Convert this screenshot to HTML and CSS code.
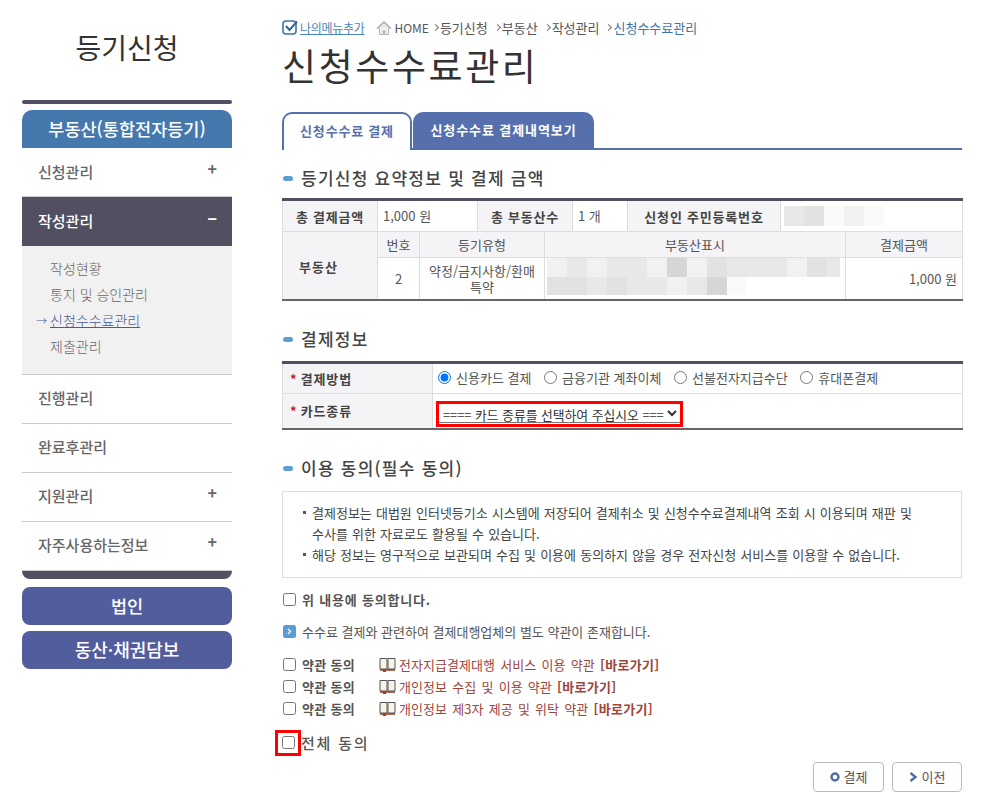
FILE: index.html
```html
<!DOCTYPE html>
<html lang="ko">
<head>
<meta charset="utf-8">
<title>신청수수료관리</title>
<link rel="stylesheet" href="styles.css">
</head>
<body>
<div class="page">
  <aside class="side">
    <h2 class="side-title">등기신청</h2>
    <div class="side-bar-top"></div>
    <div class="side-head">부동산(통합전자등기)</div>
    <ul class="menu">
      <li class="menu-item"><span>신청관리</span><span class="sign">+</span></li>
      <li class="menu-item active"><span>작성관리</span><span class="sign">−</span></li>
      <li class="submenu">
        <a>작성현황</a>
        <a>통지 및 승인관리</a>
        <a class="current">신청수수료관리</a>
        <a>제출관리</a>
      </li>
      <li class="menu-item"><span>진행관리</span></li>
      <li class="menu-item"><span>완료후관리</span></li>
      <li class="menu-item"><span>지원관리</span><span class="sign">+</span></li>
      <li class="menu-item"><span>자주사용하는정보</span><span class="sign">+</span></li>
    </ul>
    <div class="side-bar-bottom"></div>
    <div class="side-btn">법인</div>
    <div class="side-btn wide">동산·채권담보</div>
  </aside>
  <main class="main">
    <div class="crumbs">
      <svg class="ic-check" width="17" height="17" viewBox="0 0 17 17"><rect x="1" y="2" width="13" height="13" rx="3" fill="none" stroke="#3d74a8" stroke-width="1.6"/><path d="M4 7l3.500 4L15 2.500" fill="none" stroke="#2f6598" stroke-width="2"/></svg>
      <a class="mymenu">나의메뉴추가</a>
      <svg class="ic-home" width="16" height="14" viewBox="0 0 16 14"><path d="M1 7.500L8 1l7 6.500" fill="#e8e8e8" stroke="#a9a9a9" stroke-width="1.300"/><path d="M3.500 7v6.500h9V7" fill="#f4f4f4" stroke="#b5b5b5"/><rect x="6.500" y="9" width="3" height="4.500" fill="#bdbdbd"/></svg>
      <span class="crumb first">HOME</span>
      <span class="crumb">등기신청</span>
      <span class="crumb">부동산</span>
      <span class="crumb">작성관리</span>
      <span class="crumb here">신청수수료관리</span>
    </div>
    <h1 class="page-title">신청수수료관리</h1>
    <div class="tabs">
      <div class="tab on">신청수수료 결제</div>
      <div class="tab">신청수수료 결제내역보기</div>
    </div>

    <h3 class="sec first-sec">등기신청 요약정보 및 결제 금액</h3>
    <table class="tbl">
      <colgroup>
        <col class="c95"><col class="c42"><col class="c58"><col class="c67"><col class="c28"><col class="c55"><col class="c153"><col class="c65"><col class="c117">
      </colgroup>
      <tr class="r32">
        <th>총 결제금액</th>
        <td colspan="2">1,000 원</td>
        <th colspan="2">총 부동산수</th>
        <td>1 개</td>
        <th>신청인 주민등록번호</th>
        <td colspan="2" class="blurcell"><span class="blur"><i class="g2"></i><i class="g3"></i><i class="g0"></i><i class="g1"></i><i class="g0"></i></span></td>
      </tr>
      <tr class="r26">
        <th rowspan="2" class="rowh">부동산</th>
        <th class="sub">번호</th>
        <th class="sub" colspan="2">등기유형</th>
        <th class="sub" colspan="4">부동산표시</th>
        <th class="sub">결제금액</th>
      </tr>
      <tr class="r42">
        <td class="ctr">2</td>
        <td class="ctr tight" colspan="2">약정/금지사항/환매<br>특약</td>
        <td colspan="4" class="blurcell tall">
          <span class="blur top"><i class="g1"></i><i class="g2"></i><i class="g1"></i><i class="g2"></i><i class="g2"></i><i class="g1"></i><i class="g4"></i><i class="g1"></i><i class="g3"></i><i class="g2"></i><i class="g2"></i><i class="g2"></i><i class="g1"></i><i class="g3"></i><i class="g2 last"></i></span>
          <span class="blur low"><i class="g3"></i><i class="g3"></i><i class="g2"></i><i class="g3"></i><i class="g2"></i><i class="g2"></i><i class="g1"></i><i class="g2"></i><i class="g4"></i><i class="g0"></i></span>
        </td>
        <td class="num">1,000 원</td>
      </tr>
    </table>

    <h3 class="sec pay-sec">결제정보</h3>
    <table class="tbl pay">
      <colgroup><col class="c150"><col class="c530"></colgroup>
      <tr class="r31">
        <th class="left"><b class="star">*</b> 결제방법</th>
        <td class="radios">
          <label><input type="radio" name="pay" checked>신용카드 결제</label>
          <label><input type="radio" name="pay">금융기관 계좌이체</label>
          <label><input type="radio" name="pay">선불전자지급수단</label>
          <label><input type="radio" name="pay">휴대폰결제</label>
        </td>
      </tr>
      <tr class="r35">
        <th class="left"><b class="star">*</b> 카드종류</th>
        <td class="selcell">
          <span class="redbox">
            <select class="card"><option>==== 카드 종류를 선택하여 주십시오 ====</option></select>
          </span>
        </td>
      </tr>
    </table>

    <h3 class="sec agree-sec">이용 동의(필수 동의)</h3>
    <div class="notice">
      <p class="dot">결제정보는 대법원 인터넷등기소 시스템에 저장되어 결제취소 및 신청수수료결제내역 조회 시 이용되며 재판 및<br>수사를 위한 자료로도 활용될 수 있습니다.</p>
      <p class="dot">해당 정보는 영구적으로 보관되며 수집 및 이용에 동의하지 않을 경우 전자신청 서비스를 이용할 수 없습니다.</p>
    </div>

    <label class="agree-main"><input type="checkbox"><b>위 내용에 동의합니다.</b></label>
    <div class="info">
      <svg width="13" height="13" viewBox="0 0 13 13"><rect width="13" height="13" rx="2.500" fill="#5a9bd0"/><path d="M5 4l2.500 2.500L5 9" fill="none" stroke="#fff" stroke-width="1.300"/></svg>
      수수료 결제와 관련하여 결제대행업체의 별도 약관이 존재합니다.
    </div>

    <div class="terms">
      <div class="term"><label><input type="checkbox"><b>약관 동의</b></label><svg class="book" width="17" height="15" viewBox="0 0 17 15"><path d="M1 1.500h7v10.500H1zM9 1.500h7v10.500H9z" fill="#f7f3e6" stroke="#555"/><path d="M1 13h15" stroke="#8a3a20" stroke-width="1.500"/><rect x="4" y="12" width="3" height="3" fill="#b33a14"/></svg><a>전자지급결제대행 서비스 이용 약관 <b>[바로가기]</b></a></div>
      <div class="term"><label><input type="checkbox"><b>약관 동의</b></label><svg class="book" width="17" height="15" viewBox="0 0 17 15"><path d="M1 1.500h7v10.500H1zM9 1.500h7v10.500H9z" fill="#f7f3e6" stroke="#555"/><path d="M1 13h15" stroke="#8a3a20" stroke-width="1.500"/><rect x="4" y="12" width="3" height="3" fill="#b33a14"/></svg><a>개인정보 수집 및 이용 약관 <b>[바로가기]</b></a></div>
      <div class="term"><label><input type="checkbox"><b>약관 동의</b></label><svg class="book" width="17" height="15" viewBox="0 0 17 15"><path d="M1 1.500h7v10.500H1zM9 1.500h7v10.500H9z" fill="#f7f3e6" stroke="#555"/><path d="M1 13h15" stroke="#8a3a20" stroke-width="1.500"/><rect x="4" y="12" width="3" height="3" fill="#b33a14"/></svg><a>개인정보 제3자 제공 및 위탁 약관 <b>[바로가기]</b></a></div>
    </div>

    <div class="all">
      <span class="redcheck"><input type="checkbox"></span>
      <b>전체 동의</b>
    </div>

    <div class="actions">
      <button class="btn" type="button"><svg width="10" height="10" viewBox="0 0 10 10"><circle cx="5" cy="5" r="3.500" fill="none" stroke="#4f6ca8" stroke-width="2.400"/></svg>결제</button>
      <button class="btn" type="button"><svg width="9" height="10" viewBox="0 0 9 10"><path d="M1.500 1l5 4-5 4" fill="none" stroke="#4f6ca8" stroke-width="2.400"/></svg>이전</button>
    </div>
  </main>
</div>
</body>
</html>
```

FILE: styles.css
```css
* { box-sizing: border-box; }
html, body { margin: 0; padding: 0; }
body {
  width: 984px;
  height: 809px;
  overflow: hidden;
  background: #fff;
  color: #555;
  font-family: "Noto Sans CJK KR", "Liberation Sans", sans-serif;
  font-size: 13px;
}
.page { display: flex; gap: 50px; padding-left: 22px; }

/* sidebar */
.side { width: 210px; flex: none; }
.side-title {
  margin: 0;
  height: 100px;
  padding-top: 28px;
  text-align: center;
  font-size: 28px;
  line-height: 38px;
  font-weight: 400;
  color: #333;
}
.side-bar-top { height: 4px; background: #514f60; border-radius: 2px; }
.side-head {
  margin-top: 6px;
  height: 38px;
  line-height: 37px;
  text-align: center;
  background: #4579ae;
  color: #fff;
  font-size: 17.5px;
  font-weight: 500;
  border-radius: 10px 10px 0 0;
}
.menu { list-style: none; margin: 0; padding: 0; }
.menu-item {
  height: 49px;
  padding: 0 15px 2px 16px;
  display: flex;
  justify-content: space-between;
  align-items: center;
  font-size: 15px;
  font-weight: 500;
  color: #666;
  border-bottom: 1px solid #ccc;
}
.submenu ~ .menu-item { padding-bottom: 4px; }
.menu-item.active { background: #514f60; color: #fff; border-bottom: 0; }
.sign { font-size: 16px; font-weight: 700; line-height: 16px; margin-top: -6px; }
.submenu {
  height: 129px;
  padding: 9px 0 0 28px;
  background: #f1f1f1;
  border-bottom: 1px solid #ccc;
  display: flex;
  flex-direction: column;
}
.submenu a { height: 26px; line-height: 26px; font-size: 14px; color: #666; font-weight: 300; position: relative; }
.submenu a.current { color: #4c5a96; text-decoration: underline; align-self: flex-start; }
.submenu a.current::before {
  content: "→";
  position: absolute;
  left: -14px;
  top: 0;
  font-size: 11px;
}
.side-bar-bottom { height: 8px; background: #514f60; border-radius: 0 0 10px 10px; }
.side-btn {
  margin-top: 8px;
  height: 38px;
  line-height: 37px;
  text-align: center;
  background: #525d9e;
  color: #fff;
  font-size: 17.5px;
  font-weight: 500;
  border-radius: 8px;
}
.side-btn.wide { margin-top: 6px; font-size: 18px; }

/* main */
.main { width: 680px; flex: none; }
.crumbs { display: flex; align-items: center; height: 17px; margin-top: 19px; font-size: 13px; color: #555; white-space: nowrap; }
.ic-check { margin-right: 1px; }
.mymenu { color: #4b86b8; text-decoration: underline; font-size: 12px; letter-spacing: -0.3px; margin-right: 12px; }
.ic-home { margin-right: 2px; }
.crumb { margin-left: 2px; padding-left: 8px; position: relative; margin-right: 4px; }
.crumb.first { padding-left: 0; margin-left: 0; margin-right: 1px; font-size: 12px; }
.crumb::before {
  content: "";
  position: absolute;
  left: 1px;
  top: 7px;
  width: 4px;
  height: 4px;
  border-top: 1px solid #777;
  border-right: 1px solid #777;
  transform: rotate(45deg);
}
.crumb.first::before { display: none; }
.crumb.here { color: #3d74a8; }
.page-title {
  margin: 5px 0 0;
  height: 49px;
  line-height: 49px;
  font-size: 37px;
  font-weight: 400;
  letter-spacing: 2.6px;
  color: #333;
}
.tabs { margin-top: 22px; display: flex; height: 38px; border-bottom: 2px solid #5570ad; }
.tab {
  height: 37px;
  width: 181px;
  margin-left: 0;
  background: #5570ad;
  color: #fff;
  border-radius: 10px 10px 0 0;
  text-align: center;
  line-height: 35px;
  font-size: 13px;
  font-weight: 700;
  letter-spacing: 0.9px;
}
.tab.on {
  width: 130px;
  height: 38px;
  margin-right: 1px;
  background: #fff;
  color: #5570ad;
  border: 2px solid #5570ad;
  border-bottom: 0;
  line-height: 33px;
  letter-spacing: 0.8px;
}
.sec {
  margin: 0;
  height: 26px;
  line-height: 26px;
  padding-left: 19px;
  position: relative;
  font-size: 17px;
  font-weight: 500;
  color: #444;
  letter-spacing: 1.25px;
}
.sec::before {
  content: "";
  position: absolute;
  left: 1px;
  top: 11px;
  width: 10px;
  height: 5px;
  background: #5e9fd0;
  border-radius: 3px;
}
.first-sec { margin-top: 15px; }
.pay-sec { margin-top: 25px; }
.agree-sec { margin-top: 25px; }

.tbl {
  width: 680px;
  margin-top: 7px;
  table-layout: fixed;
  border-collapse: collapse;
  border-top: 3px solid #514f60;
  border-bottom: 2px solid #666;
  font-size: 13px;
}
.tbl.pay { margin-top: 9px; }
.c95 { width: 95px; } .c42 { width: 42px; } .c58 { width: 58px; } .c67 { width: 67px; }
.c28 { width: 28px; } .c55 { width: 55px; } .c153 { width: 153px; } .c65 { width: 65px; } .c117 { width: 117px; }
.c150 { width: 150px; } .c530 { width: 530px; }
.r32 { height: 32px; } .r26 { height: 26px; } .r42 { height: 42px; } .r31 { height: 31px; } .r35 { height: 35px; }
.tbl th, .tbl td { border: 1px solid #ddd; padding: 0 5px; }
.tbl th { background: #f4f4f6; font-weight: 700; color: #444; font-size: 13px; letter-spacing: 0.8px; }
.tbl th.sub { font-weight: 400; color: #555; letter-spacing: 0; }
.tbl td { color: #555; line-height: 16px; }
.tbl td.ctr { text-align: center; padding: 0 2px; }
.tbl td.num { text-align: right; }
.tbl th.rowh { text-align: left; padding: 2px 0 0 16px; letter-spacing: 1px; }
.tbl td.blurcell { padding: 2px 3px; }
.tbl td.blurcell.tall { padding: 0 2px 4px; }
.blur { display: flex; height: 20px; }
.blur.top { height: 19px; }
.blur.low { height: 18px; }
.blur i { width: 20px; flex: none; display: block; }
.blur i.last { width: 13px; }
.g0 { background: #fafafa; } .g1 { background: #f1f1f1; } .g2 { background: #e8e8e8; } .g3 { background: #e2e2e2; } .g4 { background: #d6d6d6; }
.tbl th.left { text-align: left; padding-left: 7px; letter-spacing: 0.8px; word-spacing: -1px; }
.star { color: #c0261f; font-weight: 700; }
.radios { white-space: nowrap; }
.radios label { display: inline-flex; align-items: center; margin-right: 9px; color: #555; }
.radios input { margin: 0 5px 0 0; width: 13px; height: 13px; }
.tbl td.radios { padding-left: 5px; }
.tbl td.selcell { padding: 0 0 0 3px; }
.redbox { display: flex; width: 247px; height: 26px; border: 3px solid #f00; background: #fff; margin-top: 7px; }
.card { width: 241px; height: 19px; font-family: "Noto Sans CJK KR", "Liberation Sans", sans-serif; font-size: 12.8px; border: 0; border-bottom: 1px solid #777; color: #333; background: #fff; padding: 0; }

.notice {
  margin-top: 10px;
  height: 87px;
  border: 1px solid #ddd;
  padding: 10px 20px 0 29px;
  word-spacing: 0.5px;
}
.dot { margin: 0; position: relative; font-size: 13px; line-height: 21px; color: #444; }
.dot::before { content: ""; position: absolute; left: -9px; top: 9px; width: 3px; height: 3px; background: #555; }

.agree-main { display: flex; align-items: center; margin-top: 13px; height: 18px; }
.agree-main input, .term input { width: 13px; height: 13px; margin: 0 6px 0 1px; flex: none; }
.term b { font-weight: 700; color: #555; letter-spacing: 0.3px; }
.agree-main b { font-weight: 700; color: #555; letter-spacing: 0.8px; }
.info { display: flex; align-items: center; gap: 6px; margin-top: 14px; height: 18px; padding-left: 1px; color: #555; }
.terms { margin-top: 13px; }
.term { display: flex; align-items: center; height: 22px; }
.term label { display: flex; align-items: center; width: 97px; flex: none; }
.book { margin-right: 3px; flex: none; }
.term a { color: #a0453b; word-spacing: 1.5px; letter-spacing: 0.05px; }
.term a b { color: #a0453b; }
.all { display: flex; align-items: center; margin-top: 11px; height: 24px; margin-left: -7px; }
.redcheck { display: flex; align-items: center; justify-content: center; width: 26px; height: 26px; border: 3px solid #f00; flex: none; }
.redcheck input { width: 13px; height: 13px; margin: 0; }
.all b { font-size: 15px; font-weight: 500; color: #555; letter-spacing: 1.8px; }
.actions { display: flex; justify-content: flex-end; gap: 8px; margin-top: 7px; }
.btn {
  width: 71px;
  height: 30px;
  border: 1px solid #bbb;
  border-radius: 4px;
  background: #fff;
  display: flex;
  align-items: center;
  justify-content: center;
  gap: 4px;
  font-family: "Noto Sans CJK KR", "Liberation Sans", sans-serif;
  font-size: 13px;
  color: #555;
  padding: 0;
}
.btn:last-child { width: 70px; }
```
